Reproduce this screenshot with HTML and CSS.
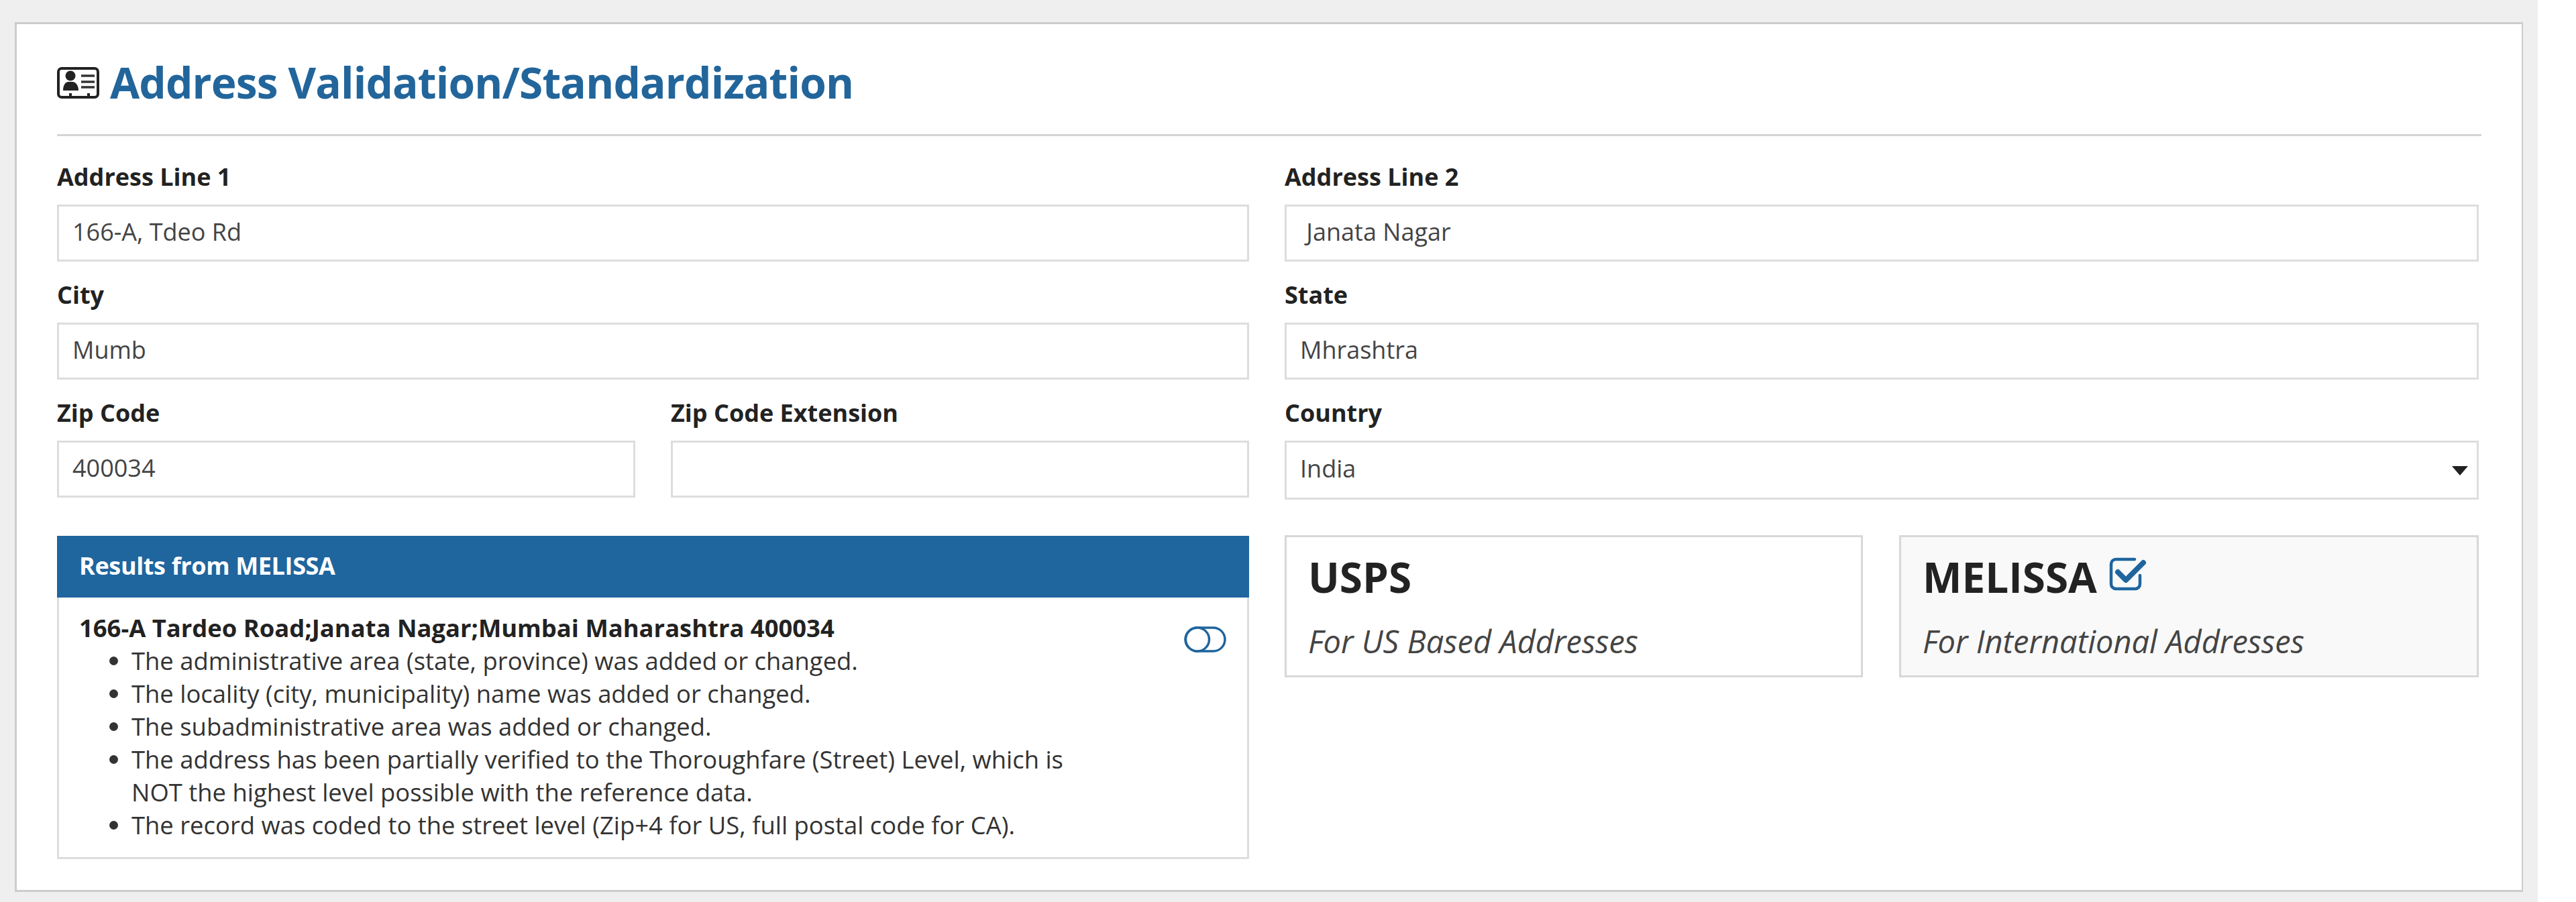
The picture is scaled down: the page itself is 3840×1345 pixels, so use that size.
FILE: index.html
```html
<!DOCTYPE html>
<html lang="en">
<head>
<meta charset="utf-8">
<title>Address Validation/Standardization</title>
<link rel="stylesheet" href="styles.css">
</head>
<body>
<div class="page">
  <main class="card">
    <header class="card-head">
      <svg class="id-icon" viewBox="0 0 63 47" aria-hidden="true">
        <rect x="2" y="2" width="59" height="43" rx="5" fill="none" stroke="#222" stroke-width="4"/>
        <circle cx="20" cy="13" r="7.5" fill="#222"/>
        <path d="M9 35c0-9 4-13 8-13h6c4 0 9 4 9 13z" fill="#222"/>
        <path d="M36 13h20M36 22h20M36 30h20" stroke="#333" stroke-width="3.4"/>
        <path d="M18 45v-6h4v6zM45 45v-6h4v6z" fill="#222"/>
      </svg>
      <h1 class="title">Address Validation/Standardization</h1>
    </header>
    <form class="form">
      <div class="field"><label class="label">Address Line 1</label><input class="control" value="166-A, Tdeo Rd"></div>
      <div class="field"><label class="label">Address Line 2</label><input class="control" value=" Janata Nagar"></div>
      <div class="field"><label class="label">City</label><input class="control" value="Mumb"></div>
      <div class="field"><label class="label">State</label><input class="control" value="Mhrashtra"></div>
      <div class="zip-pair">
        <div class="field"><label class="label">Zip Code</label><input class="control" value="400034"></div>
        <div class="field"><label class="label">Zip Code Extension</label><input class="control" value=""></div>
      </div>
      <div class="field"><label class="label">Country</label>
        <div class="select-wrap">
          <select class="control select"><option>India</option></select>
          <svg class="caret" viewBox="0 0 24 14" aria-hidden="true"><path d="M0 0h24L12 14z" fill="#222"/></svg>
        </div>
      </div>
      <section class="results">
        <h2 class="results-head">Results from MELISSA</h2>
        <div class="results-body">
          <div class="results-text">
            <strong class="result-address">166-A Tardeo Road;Janata Nagar;Mumbai Maharashtra 400034</strong>
            <ul class="result-list">
              <li>The administrative area (state, province) was added or changed.</li>
              <li>The locality (city, municipality) name was added or changed.</li>
              <li>The subadministrative area was added or changed.</li>
              <li>The address has been partially verified to the Thoroughfare (Street) Level, which is NOT the highest level possible with the reference data.</li>
              <li>The record was coded to the street level (Zip+4 for US, full postal code for CA).</li>
            </ul>
          </div>
          <svg class="toggle" viewBox="0 0 63 39" aria-hidden="true">
            <rect x="2" y="2" width="59" height="35" rx="17.5" fill="none" stroke="#1f659e" stroke-width="3.5"/>
            <circle cx="20" cy="19.5" r="17.5" fill="#fff" stroke="#1f659e" stroke-width="3.5"/>
          </svg>
        </div>
      </section>
      <div class="providers">
        <div class="provider">
          <div class="provider-name">USPS</div>
          <div class="provider-note">For US Based Addresses</div>
        </div>
        <div class="provider provider-active">
          <div class="provider-name">MELISSA
            <svg class="check" viewBox="0 0 56 50" aria-hidden="true">
              <path d="M38 3H10a7 7 0 0 0-7 7v30a7 7 0 0 0 7 7h29a7 7 0 0 0 7-7V27" fill="none" stroke="#1f659e" stroke-width="4.5" stroke-linecap="round"/>
              <path d="M13 22l12 12L51 8" fill="none" stroke="#1f659e" stroke-width="8" stroke-linecap="round" stroke-linejoin="round"/>
            </svg>
          </div>
          <div class="provider-note">For International Addresses</div>
        </div>
      </div>
    </form>
  </main>
</div>
</body>
</html>
```
FILE: styles.css
```css
* { box-sizing: border-box; }
html, body { margin: 0; padding: 0; background: #fff; overflow: hidden; }
body { font-family: "Open Sans", "Liberation Sans", sans-serif; color: #222; }

.page {
  width: 3783px;
  height: 1345px;
  padding: 33px 22px 15px;
  background: #efefef;
}
.card {
  height: 1297px;
  padding: 0 60px;
  background: #fff;
  border: 3px solid #ccc;
  border-right-width: 2px;
}
.card-head {
  display: flex;
  align-items: center;
  gap: 16px;
  height: 167px;
  padding-bottom: 36px;
  padding-top: 46px;
  border-bottom: 3px solid #d4d4d4;
}
.id-icon { width: 63px; height: 47px; flex: none; }
.title {
  margin: 0;
  font-size: 64px;
  line-height: 80px;
  font-weight: 700;
  letter-spacing: -0.85px;
  color: #22659b;
}
.form {
  display: grid;
  grid-template-columns: 1777px 1780px;
  column-gap: 53px;
  padding-top: 38px;
  align-items: start;
}
.field { height: 176px; }
.label {
  display: block;
  font-size: 36px;
  line-height: 46px;
  font-weight: 700;
  margin-bottom: 18px;
}
.control {
  display: block;
  width: 100%;
  height: 85px;
  margin: 0;
  padding: 0 20px 5px;
  font: 400 36px "Open Sans", "Liberation Sans", sans-serif;
  color: #444;
  background: #fff;
  border: 3px solid #ddd;
  border-radius: 0;
  outline: 0;
}
.zip-pair {
  display: grid;
  grid-template-columns: 862px 862px;
  column-gap: 53px;
}
.select-wrap { position: relative; }
.select { height: 88px; appearance: none; -webkit-appearance: none; }
.caret {
  position: absolute;
  right: 16px;
  top: 38px;
  width: 24px;
  height: 14px;
}
.results {
  margin-top: 30px;
  height: 482px;
  border: 3px solid #ddd;
  border-top: 0;
}
.results-head {
  margin: 0 -3px;
  height: 92px;
  padding-left: 33px;
  padding-bottom: 3px;
  font-size: 36px;
  line-height: 89px;
  font-weight: 700;
  letter-spacing: -0.35px;
  color: #fff;
  background: #1f659e;
}
.results-body {
  display: flex;
  justify-content: space-between;
  padding: 21px 31px 0 30px;
}
.results-text { width: 1522px; font-size: 36.4px; line-height: 49px; color: #333; }
.result-address { display: block; font-weight: 700; font-size: 36.4px; color: #222; }
.result-list { margin: 0; padding: 0 0 0 78px; }
.toggle { width: 63px; height: 39px; margin-top: 22px; flex: none; }
.providers {
  display: grid;
  grid-template-columns: 862px 864px;
  column-gap: 54px;
  margin-top: 29px;
}
.provider {
  height: 212px;
  padding: 19px 32px 0;
  background: #fff;
  border: 3px solid #d8d8d8;
}
.provider-active { background: #f9f9f9; }
.provider-name {
  display: flex;
  align-items: center;
  gap: 18px;
  font-size: 62px;
  line-height: 80px;
  font-weight: 700;
  color: #222;
}
.provider-note {
  margin-top: 32px;
  font-size: 47px;
  line-height: 48px;
  font-style: italic;
  color: #444;
}
.check { width: 56px; height: 50px; flex: none; margin-top: -8px; }
```
